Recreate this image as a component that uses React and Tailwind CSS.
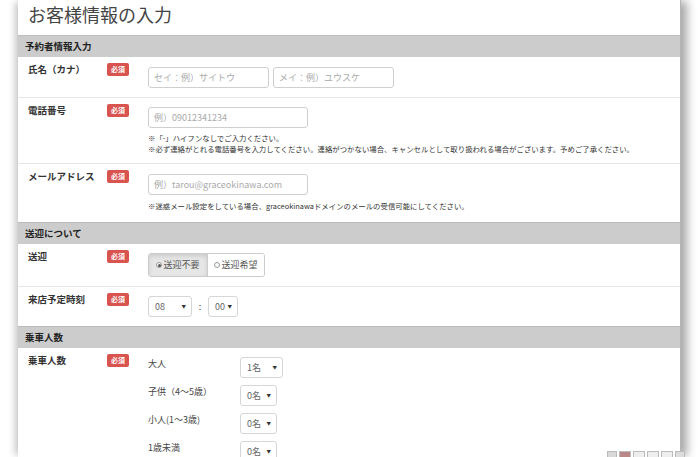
import React from 'react';

const jp = "font-['Noto_Sans_CJK_JP','Noto_Sans',sans-serif]";

const Badge = () => (
  <span className="flex items-center justify-center w-[22px] h-[13px] rounded-[2px] bg-[#d9534f] text-white text-[7px] font-bold leading-none">
    必須
  </span>
);

const SectionBar = ({ title }) => (
  <div className="h-[22px] bg-[#cccccc] border-t border-[#bdbdbd] flex items-center pl-[7px]">
    <span className="text-[9.5px] font-bold text-[#222]">{title}</span>
  </div>
);

const Row = ({ label, children, last }) => (
  <div className={`flex pt-[9px] pb-[9px] ${last ? '' : 'border-b border-[#e6e6e6]'}`}>
    <div className="w-[89px] shrink-0 pl-[10px] -mt-[3px] text-[9.5px] font-bold leading-[13px] text-[#333]">
      {label}
    </div>
    <div className="w-[41px] shrink-0 -mt-[3px] flex items-start">
      <Badge />
    </div>
    <div className="flex-1">{children}</div>
  </div>
);

const TextBox = ({ placeholder, width }) => (
  <div className={`${width} h-[21px] border border-[#cfcfcf] rounded-[3px] flex items-center px-[5px] text-[9px] text-[#aaa] bg-white`}>
    {placeholder}
  </div>
);

const Note = ({ children }) => (
  <p className="text-[7.4px] leading-[11px] text-[#333] whitespace-nowrap">{children}</p>
);

const SelectBox = ({ value, width }) => (
  <div className={`${width} h-[21px] border border-[#d6d6d6] rounded-[3px] flex items-center justify-between pl-[6px] pr-[5px] text-[9px] text-[#666] bg-white`}>
    <span>{value}</span>
    <span className="text-[4.5px] text-[#333]">▼</span>
  </div>
);

const Radio = ({ checked }) => (
  <span className="inline-flex items-center justify-center w-[6px] h-[6px] rounded-full border border-[#999] bg-white mr-[1px]">
    {checked && <span className="w-[3px] h-[3px] rounded-full bg-[#555]" />}
  </span>
);

const passengers = [
  { label: '大人', value: '1名', width: 'w-[43px]' },
  { label: '子供（4〜5歳）', value: '0名', width: 'w-[37px]' },
  { label: '小人(1〜3歳)', value: '0名', width: 'w-[37px]' },
  { label: '1歳未満', value: '0名', width: 'w-[37px]' },
];

export default function App() {
  return (
    <div className={`relative w-[700px] h-[457px] overflow-hidden bg-white ${jp}`}>
      <div className="ml-[18px] w-[663px] h-[457px] bg-white border-r border-[#b5b5b5] shadow-[-5px_0_7px_-2px_rgba(0,0,0,0.22),7px_0_9px_-1px_rgba(0,0,0,0.35)]">
        <div className="h-[35px] pl-[10px] pt-[3px]">
          <h1 className="text-[18px] leading-[22px] text-[#444]">お客様情報の入力</h1>
        </div>

        <SectionBar title="予約者情報入力" />

        <Row label="氏名（カナ）">
          <div className="flex gap-[4px] pt-px">
            <TextBox placeholder="セイ：例）サイトウ" width="w-[121px]" />
            <TextBox placeholder="メイ：例）ユウスケ" width="w-[121px]" />
          </div>
        </Row>

        <Row label="電話番号">
          <TextBox placeholder="例）09012341234" width="w-[160px]" />
          <div className="mt-[4px]">
            <Note>※「-」ハイフンなしでご入力ください。</Note>
            <Note>※必ず連絡がとれる電話番号を入力してください。連絡がつかない場合、キャンセルとして取り扱われる場合がございます。予めご了承ください。</Note>
          </div>
        </Row>

        <Row label="メールアドレス" last>
          <div className="pt-px">
            <TextBox placeholder="例）tarou@graceokinawa.com" width="w-[160px]" />
          </div>
          <div className="mt-[5px] pb-[2px]">
            <Note>※迷惑メール設定をしている場合、graceokinawaドメインのメールの受信可能にしてください。</Note>
          </div>
        </Row>

        <SectionBar title="送迎について" />

        <Row label="送迎">
          <div className="flex w-[117px] h-[24px] border border-[#cccccc] rounded-[3px] overflow-hidden text-[9px] text-[#555]">
            <div className="w-[59px] flex items-center justify-center bg-[#e6e6e6] border-r border-[#cccccc] shadow-[inset_0_2px_4px_rgba(0,0,0,0.12)]">
              <Radio checked />送迎不要
            </div>
            <div className="flex-1 flex items-center justify-center bg-white">
              <Radio />送迎希望
            </div>
          </div>
        </Row>

        <Row label="来店予定時刻" last>
          <div className="flex items-center">
            <SelectBox value="08" width="w-[44px]" />
            <span className="w-[16px] text-center text-[9px] text-[#444]">:</span>
            <SelectBox value="00" width="w-[30px]" />
          </div>
        </Row>

        <SectionBar title="乗車人数" />

        <Row label="乗車人数" last>
          <div className="flex flex-col gap-[7px]">
            {passengers.map((p) => (
              <div key={p.label} className="flex items-start">
                <span className="w-[92px] text-[9px] leading-[13px] text-[#444]">{p.label}</span>
                <SelectBox value={p.value} width={p.width} />
              </div>
            ))}
          </div>
        </Row>
      </div>

      <div className="absolute left-[607px] top-[451px] flex gap-[2px]">
        <div className="w-[10px] h-[8px] bg-[#d8d8d8] border border-[#bbb]" />
        <div className="w-[12px] h-[8px] bg-[#b88] border border-[#bbb]" />
        <div className="w-[12px] h-[8px] bg-[#eee] border border-[#bbb]" />
        <div className="w-[12px] h-[8px] bg-[#eee] border border-[#bbb]" />
        <div className="w-[12px] h-[8px] bg-[#eee] border border-[#bbb]" />
        <div className="w-[10px] h-[8px] bg-[#ddd] border border-[#bbb]" />
      </div>
    </div>
  );
}
